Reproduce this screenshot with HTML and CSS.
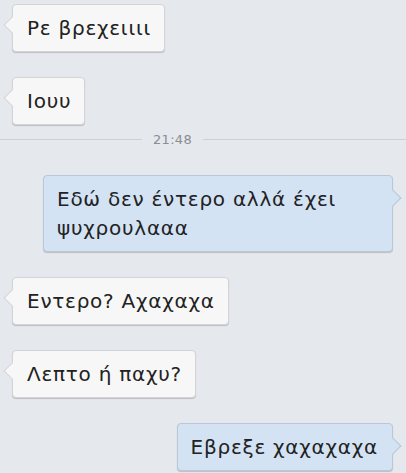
FILE: index.html
```html
<!DOCTYPE html>
<html lang="el">
<head>
<meta charset="utf-8">
<link rel="stylesheet" href="styles.css">
</head>
<body>
<div class="chat">
  <div class="row in"><div class="bubble">Ρε βρεχειιιι</div></div>
  <div class="row in"><div class="bubble">Ιουυ</div></div>
  <div class="sep"><span class="line"></span><span class="time">21:48</span><span class="line"></span></div>
  <div class="row out"><div class="bubble">Εδώ δεν έντερο αλλά έχει ψυχρουλααα</div></div>
  <div class="row in"><div class="bubble">Εντερο? Αχαχαχα</div></div>
  <div class="row in"><div class="bubble">Λεπτο ή παχυ?</div></div>
  <div class="row out"><div class="bubble">Εβρεξε χαχαχαχα</div></div>
</div>
</body>
</html>
```
FILE: styles.css
```css
html, body {
  margin: 0;
  padding: 0;
  background: #e5e8ec;
}
body {
  width: 406px;
  height: 473px;
  overflow: hidden;
  font-family: "DejaVu Sans", "Noto Sans", sans-serif;
  color: #222;
}
.chat {
  display: flex;
  flex-direction: column;
  gap: 25px;
  padding: 4px 13px 0 12px;
}
.row {
  display: flex;
}
.row.out {
  justify-content: flex-end;
}
.bubble {
  position: relative;
  box-sizing: border-box;
  max-width: 350px;
  font-size: 20px;
  letter-spacing: 0.75px;
  line-height: 29px;
  padding: 9px 13px 8px 14px;
  border-radius: 4px;
  background: #f7f7f7;
  border: 1px solid #d2d4d8;
  box-shadow: 0 1px 1px rgba(0,0,0,0.18);
}
.in .bubble::before {
  content: "";
  position: absolute;
  left: -7px;
  top: 14px;
  width: 11px;
  height: 11px;
  background: #f7f7f7;
  border-left: 1px solid #d2d4d8;
  border-bottom: 1px solid #d2d4d8;
  transform: rotate(45deg);
}
.out .bubble {
  background: #d3e3f4;
  border-color: #b9c7d6;
  padding-left: 13px;
  padding-right: 14px;
}
.out .bubble::before {
  content: "";
  position: absolute;
  right: -7px;
  top: 16px;
  width: 11px;
  height: 11px;
  background: #d3e3f4;
  border-right: 1px solid #b9c7d6;
  border-top: 1px solid #b9c7d6;
  transform: rotate(45deg);
}
.sep {
  display: flex;
  align-items: center;
  gap: 11px;
  margin: -24px -13px -2px -12px;
  height: 26px;
}
.sep .line {
  flex: 1;
  height: 1px;
  background: #cdd0d4;
}
.sep .line:first-child {
  flex: 0 0 142px;
}
.time {
  font-size: 13px;
  letter-spacing: 0.3px;
  color: #8a8d91;
}
```
